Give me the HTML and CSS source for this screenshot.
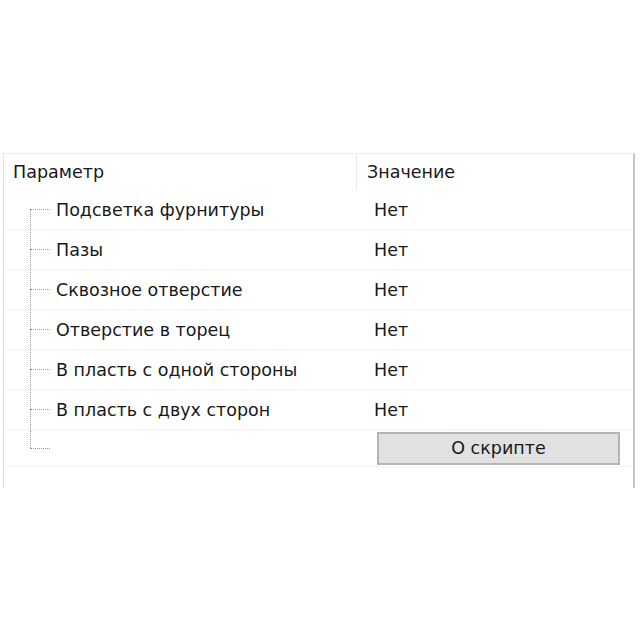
FILE: index.html
```html
<!DOCTYPE html>
<html lang="ru">
<head>
  <meta charset="UTF-8">
  <title>Параметры скрипта</title>
  <link rel="stylesheet" href="styles.css">
</head>
<body>
  <div class="grid">
    <div class="row head">
      <div class="name">Параметр</div>
      <div class="value">Значение</div>
    </div>

    <div class="row first">
      <div class="twig"><div class="up"></div><div class="down"></div></div>
      <div class="label">Подсветка фурнитуры</div>
      <div class="value">Нет</div>
    </div>
    <div class="row">
      <div class="twig"><div class="up"></div><div class="down"></div></div>
      <div class="label">Пазы</div>
      <div class="value">Нет</div>
    </div>
    <div class="row">
      <div class="twig"><div class="up"></div><div class="down"></div></div>
      <div class="label">Сквозное отверстие</div>
      <div class="value">Нет</div>
    </div>
    <div class="row">
      <div class="twig"><div class="up"></div><div class="down"></div></div>
      <div class="label">Отверстие в торец</div>
      <div class="value">Нет</div>
    </div>
    <div class="row">
      <div class="twig"><div class="up"></div><div class="down"></div></div>
      <div class="label">В пласть с одной стороны</div>
      <div class="value">Нет</div>
    </div>
    <div class="row">
      <div class="twig"><div class="up"></div><div class="down"></div></div>
      <div class="label">В пласть с двух сторон</div>
      <div class="value">Нет</div>
    </div>
    <div class="row last">
      <div class="twig"><div class="up"></div><div class="down"></div></div>
      <div class="label"></div>
      <div class="value"><button class="about">О скрипте</button></div>
    </div>
  </div>
</body>
</html>
```

FILE: styles.css
```css
body {
  margin: 0;
  background: #fff;
  font-family: 'DejaVu Sans', sans-serif;
  font-size: 17.5px;
  color: #181818;
}

.grid {
  margin: 153px 0 0 3px;
  width: 629px;
  height: 334px;
  border-top: 1px solid #ececec;
  border-left: 1px solid #e0e0e0;
  border-right: 2px solid #c6c6c6;
}

.row {
  display: flex;
  height: 40px;
  border-bottom: 1px solid #f4f4f4;
  box-sizing: border-box;
}

.row.head {
  height: 36px;
  border-bottom: none;
}

.head .name {
  width: 353px;
  padding-left: 9px;
  box-sizing: border-box;
  display: flex;
  align-items: center;
  border-right: 1px solid #e8e8e8;
}

.head .value {
  padding-left: 10px;
  display: flex;
  align-items: center;
}

.twig {
  width: 52px;
  padding-left: 26px;
  box-sizing: border-box;
  display: flex;
  flex-direction: column;
}

.twig .up,
.twig .down {
  flex: 1;
  width: 20px;
  box-sizing: border-box;
}

.twig .up {
  border-left: 1px dotted #9a9a9a;
}

.twig .down {
  border-top: 1px dotted #9a9a9a;
  border-left: 1px dotted #9a9a9a;
}

.row.first .twig .up {
  border-left: none;
}

.row.last .twig .down {
  border-left: none;
}

.label {
  width: 300px;
  display: flex;
  align-items: center;
}

.row .value {
  flex: 1;
  display: flex;
  align-items: center;
  padding-left: 18px;
}

.row.head .value {
  padding-left: 10px;
}

.row.last {
  height: 37px;
}

.about {
  width: 243px;
  height: 33px;
  margin-left: 3px;
  background: #e1e1e1;
  border: 2px solid #b4b4b4;
  font-family: inherit;
  font-size: 17.5px;
  color: #181818;
}
```
